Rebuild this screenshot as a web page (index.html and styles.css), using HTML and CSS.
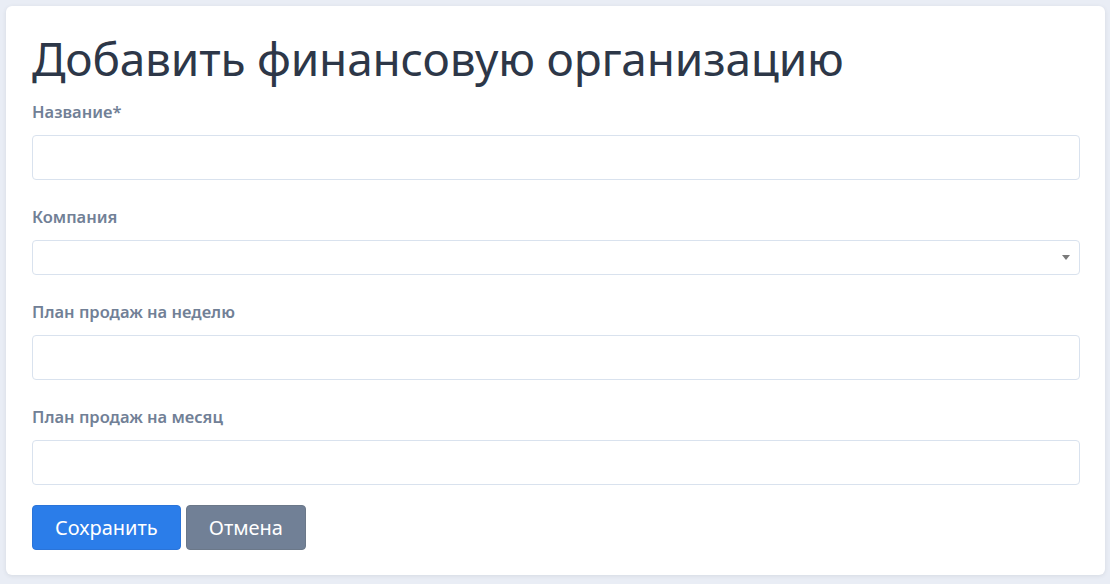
FILE: index.html
```html
<!DOCTYPE html>
<html lang="ru">
<head>
<meta charset="utf-8">
<title>Добавить финансовую организацию</title>
<link rel="stylesheet" href="styles.css">
</head>
<body>
<div class="page">
  <form class="card">
    <h1 class="title">Добавить финансовую организацию</h1>
    <div class="group">
      <label class="label">Название*</label>
      <input class="input" type="text">
    </div>
    <div class="group">
      <label class="label">Компания</label>
      <div class="select">
        <span class="select-arrow"></span>
      </div>
    </div>
    <div class="group">
      <label class="label">План продаж на неделю</label>
      <input class="input" type="text">
    </div>
    <div class="group group-last">
      <label class="label">План продаж на месяц</label>
      <input class="input" type="text">
    </div>
    <div class="actions">
      <button type="button" class="btn btn-primary">Сохранить</button>
      <button type="button" class="btn btn-secondary">Отмена</button>
    </div>
  </form>
</div>
</body>
</html>
```
FILE: styles.css
```css
* { box-sizing: border-box; }
html, body { margin: 0; padding: 0; }
body {
  background: #e9edf5;
  font-family: "Noto Sans", "Open Sans", sans-serif;
  color: #2d3748;
}
.page {
  padding: 6px 5px 9px 6px;
}
.card {
  background: #fff;
  border-radius: 6px;
  box-shadow: 0 1px 4px rgba(45, 55, 72, 0.10);
  padding: 24px 25px 25px 26px;
  display: flex;
  flex-direction: column;
}
.title {
  margin: 0 0 14px 0;
  font-size: 46px;
  font-weight: 400;
  line-height: 56px;
  color: #2d3748;
  letter-spacing: -0.2px;
}
.group {
  display: flex;
  flex-direction: column;
  margin-bottom: 25px;
}
.group-last {
  margin-bottom: 20px;
}
.label {
  font-size: 16.5px;
  font-weight: 600;
  line-height: 24px;
  color: #718096;
  margin-bottom: 11px;
}
.input {
  height: 45px;
  border: 1px solid #d9e2ee;
  border-radius: 4px;
  background: #fff;
  font: inherit;
  width: 100%;
}
.select {
  position: relative;
  height: 35px;
  border: 1px solid #d9e2ee;
  border-radius: 4px;
  background: #fff;
}
.select-arrow {
  position: absolute;
  right: 9px;
  top: 14px;
  width: 0;
  height: 0;
  border-left: 4.5px solid transparent;
  border-right: 4.5px solid transparent;
  border-top: 5px solid #7a7a7a;
}
.actions {
  display: flex;
  gap: 5px;
}
.btn {
  height: 45px;
  border: 1px solid transparent;
  border-radius: 4px;
  font-family: "Noto Sans", "Open Sans", sans-serif;
  font-size: 20px;
  font-weight: 400;
  color: #fff;
  padding: 0 22px;
  cursor: pointer;
}
.btn-primary {
  background: #2b7de9;
  border-color: #2a74d9;
}
.btn-secondary {
  background: #718096;
  border-color: #6b7889;
}
```
